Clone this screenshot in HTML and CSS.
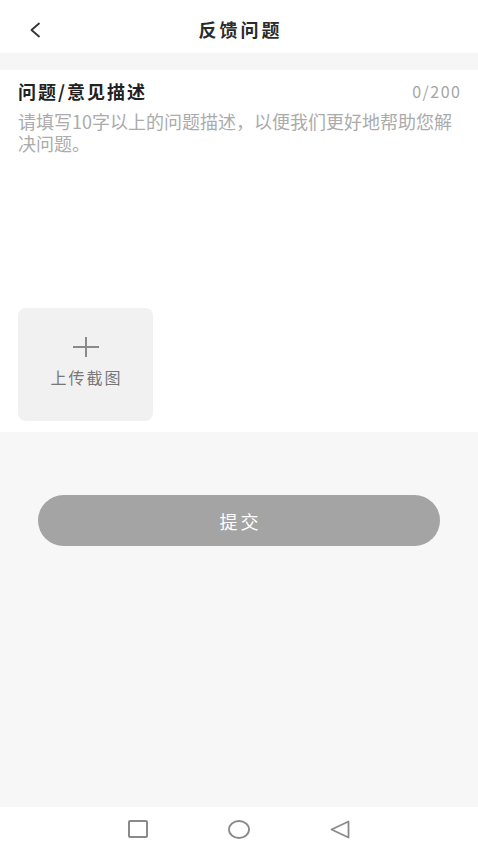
FILE: index.html
```html
<!DOCTYPE html>
<html lang="zh-CN">
<head>
<meta charset="utf-8">
<title>反馈问题</title>
<link rel="stylesheet" href="styles.css">
</head>
<body>
<div class="page">
  <header class="topbar">
    <span class="back">
      <svg width="14" height="16" viewBox="0 0 14 16"><path d="M11 1.5 L3.5 8 L11 14.5" fill="none" stroke="#333" stroke-width="1.8" stroke-linecap="round" stroke-linejoin="round"/></svg>
    </span>
    <h1 class="title">反馈问题</h1>
  </header>
  <div class="strip"></div>
  <section class="form">
    <div class="form-head">
      <span class="form-title">问题/意见描述</span>
      <span class="counter">0/200</span>
    </div>
    <div class="placeholder">请填写10字以上的问题描述，以便我们更好地帮助您解决问题。</div>
    <div class="upload">
      <svg width="26" height="20" viewBox="0 0 26 20"><path d="M0 10 H26 M13 0 V20" stroke="#8a8a8a" stroke-width="2"/></svg>
      <span class="upload-text">上传截图</span>
    </div>
  </section>
  <main class="rest">
    <button class="submit">提交</button>
  </main>
  <nav class="navbar">
    <svg width="20" height="18" viewBox="0 0 20 18"><rect x="1" y="1" width="18" height="16" rx="1" fill="none" stroke="#8a8a8a" stroke-width="2"/></svg>
    <svg width="22" height="19" viewBox="0 0 22 19"><ellipse cx="11" cy="9.5" rx="10" ry="8.5" fill="none" stroke="#8a8a8a" stroke-width="1.8"/></svg>
    <svg width="20" height="19" viewBox="0 0 20 19"><path d="M18.5 1.5 V17.5 L1.5 9.5 Z" fill="none" stroke="#8a8a8a" stroke-width="1.8" stroke-linejoin="round"/></svg>
  </nav>
</div>
</body>
</html>
```
FILE: styles.css
```css
* { box-sizing: border-box; margin: 0; padding: 0; }
html, body { width: 478px; height: 850px; }
body {
  font-family: "Noto Sans CJK SC", "Noto Sans", sans-serif;
  background: #f7f7f7;
  overflow: hidden;
}
.page {
  display: flex;
  flex-direction: column;
  height: 850px;
}
.topbar {
  height: 53px;
  background: #fff;
  display: flex;
  align-items: center;
  justify-content: center;
  position: relative;
}
.back {
  position: absolute;
  left: 28px;
  top: 22px;
  display: flex;
}
.title {
  font-size: 18px;
  font-weight: 700;
  color: #2b2b2b;
  letter-spacing: 3px;
  margin-left: 3px;
  line-height: 24px;
  margin-top: 4px;
}
.strip {
  height: 17px;
  background: #f6f6f6;
}
.form {
  background: #fff;
  padding: 9px 18px 11px 18px;
  height: 362px;
}
.form-head {
  display: flex;
  justify-content: space-between;
  align-items: center;
  height: 24px;
}
.form-title {
  font-size: 18px;
  font-weight: 700;
  color: #222;
  letter-spacing: 2px;
  line-height: 24px;
}
.counter {
  font-size: 16px;
  color: #a6a6a6;
  letter-spacing: 1.5px;
  margin-right: -1.5px;
  line-height: 24px;
}
.placeholder {
  margin-top: 7px;
  height: 188px;
  font-size: 18px;
  line-height: 22px;
  letter-spacing: 0;
  color: #ababab;
}
.upload {
  margin-top: 10px;
  width: 135px;
  height: 113px;
  background: #f2f1f2;
  border-radius: 8px;
  display: flex;
  flex-direction: column;
  align-items: center;
  padding-top: 29px;
  gap: 10px;
}
.upload-text {
  font-size: 16px;
  line-height: 20px;
  color: #777;
  letter-spacing: 2px;
  margin-right: -2px;
}
.rest {
  flex: 1;
  background: #f7f7f7;
  padding: 63px 38px 0 38px;
}
.submit {
  width: 100%;
  height: 51px;
  border: none;
  border-radius: 26px;
  background: #a4a4a4;
  color: #fff;
  font-family: "Noto Sans CJK SC", "Noto Sans", sans-serif;
  font-size: 18px;
  letter-spacing: 3px;
  text-indent: 3px;
}
.navbar {
  height: 43px;
  background: #fff;
  display: flex;
  align-items: center;
  justify-content: center;
  gap: 80px;
  padding-top: 1px;
}
```
